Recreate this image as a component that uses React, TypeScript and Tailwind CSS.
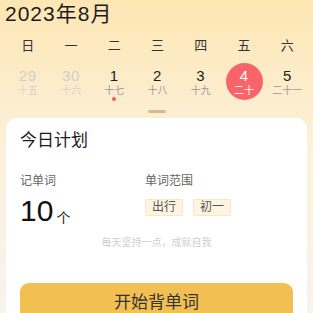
import React from "react";

const weekDays = ["日", "一", "二", "三", "四", "五", "六"];

type Day = { num: string; lunar: string; muted?: boolean; today?: boolean; dot?: boolean };

const days: Day[] = [
  { num: "29", lunar: "十五", muted: true },
  { num: "30", lunar: "十六", muted: true },
  { num: "1", lunar: "十七", dot: true },
  { num: "2", lunar: "十八" },
  { num: "3", lunar: "十九" },
  { num: "4", lunar: "二十", today: true },
  { num: "5", lunar: "二十一" },
];

export default function App() {
  return (
    <div
      className="h-[313px] w-[313px] overflow-hidden bg-gradient-to-b from-[#fde6b3] via-[#fcf1dd] to-[#f7f3ec] text-[#222]"
      style={{ fontFamily: '"Liberation Sans", "Noto Sans CJK SC", sans-serif' }}
    >
      <div className="px-[5px] pt-[1px] text-[21px] leading-[25px] tracking-[1px] text-[#1c1c1c]">2023年8月</div>

      <div className="mt-[8px] grid grid-cols-7 pl-[6px] pr-[4px]">
        {weekDays.map((d) => (
          <div key={d} className="text-center text-[13px] leading-[24px] text-[#333]">
            {d}
          </div>
        ))}
      </div>

      <div className="mt-[5px] grid grid-cols-7 pl-[6px] pr-[4px]">
        {days.map((d) => (
          <div key={d.num} className="relative flex justify-center">
            <div
              className={`flex h-[37px] w-[37px] flex-col items-center justify-center rounded-full ${
                d.today ? "bg-[#f9646a]" : ""
              }`}
            >
              <span
                className={`text-[15px] leading-[17px] tracking-[0.5px] ${
                  d.today ? "text-white" : d.muted ? "text-[#cfcfcf]" : "text-[#1c1c1c]"
                }`}
              >
                {d.num}
              </span>
              <span
                className={`whitespace-nowrap text-[10px] leading-[13px] ${
                  d.today ? "text-white" : d.muted ? "text-[#d2d2d2]" : "text-[#9a9a9a]"
                }`}
              >
                {d.lunar}
              </span>
            </div>
            {d.dot && <span className="absolute bottom-[-1px] h-[4px] w-[4px] rounded-full bg-[#f55c5c]" />}
          </div>
        ))}
      </div>

      <div className="mt-[10px] flex justify-center">
        <div className="h-[3px] w-[18px] rounded-full bg-[#d6bb88]" />
      </div>

      <div className="mx-[6px] mt-[5px] rounded-[11px] bg-white px-[14px] pt-[11px]">
        <div className="text-[17px] leading-[24px] text-[#1c1c1c]">今日计划</div>

        <div className="mt-[20px] flex">
          <div className="w-[125px]">
            <div className="text-[12px] leading-[16px] text-[#666]">记单词</div>
            <div className="mt-[6px] flex items-end">
              <span className="text-[30px] leading-[32px] text-[#111]">10</span>
              <span className="mb-[1px] ml-[3px] text-[14px] leading-[16px] text-[#222]">个</span>
            </div>
          </div>
          <div>
            <div className="text-[12px] leading-[16px] text-[#666]">单词范围</div>
            <div className="mt-[10px] flex gap-[10px]">
              <span className="rounded-[2px] border border-[#fbe6bd] bg-[#fdf4e1] px-[6px] text-[12px] leading-[15px] text-[#555]">
                出行
              </span>
              <span className="rounded-[2px] border border-[#fbe6bd] bg-[#fdf4e1] px-[6px] text-[12px] leading-[15px] text-[#555]">
                初一
              </span>
            </div>
          </div>
        </div>

        <div className="mt-[9px] text-center text-[10px] leading-[14px] text-[#cfcfcf]">每天坚持一点，成就自我</div>

        <button className="mt-[33px] h-[40px] w-full rounded-[9px] bg-[#f2c052] text-[17px] text-[#333]">
          开始背单词
        </button>
      </div>
    </div>
  );
}
